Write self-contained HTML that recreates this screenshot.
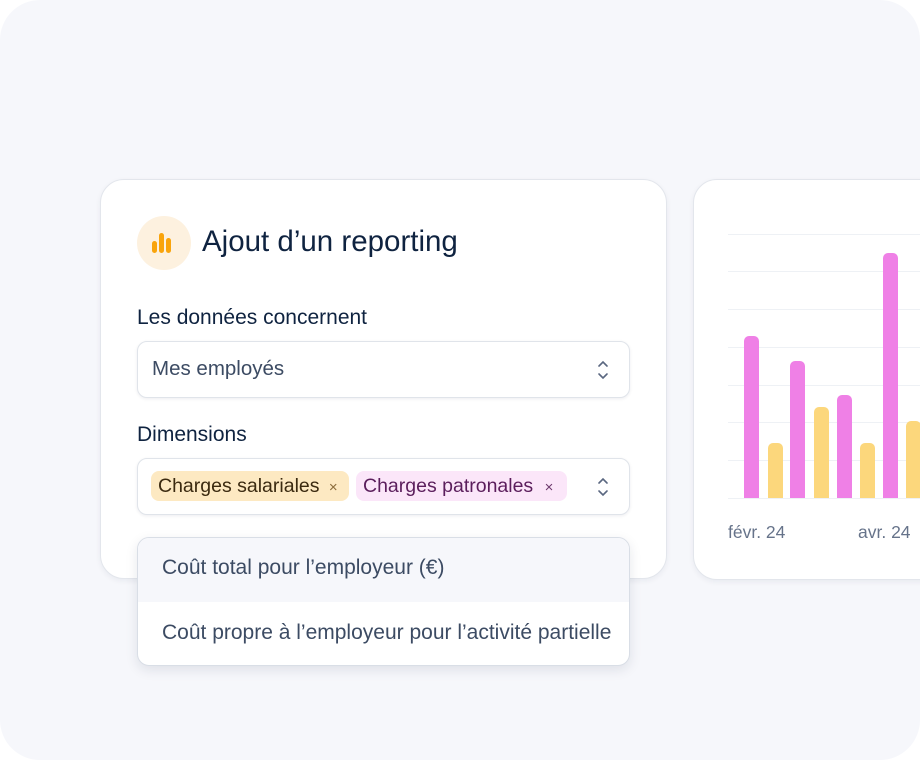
<!DOCTYPE html>
<html><head><meta charset="utf-8"><style>
*{box-sizing:border-box;margin:0;padding:0}
body{width:920px;height:760px;background:#fff;font-family:"Liberation Sans",sans-serif;position:relative;overflow:hidden}
.bg{position:absolute;left:0;top:0;width:920px;height:760px;background:#f6f7fb;border-radius:40px}
.card{position:absolute;background:#fff;border:1px solid #e3e6ec;border-radius:24px;box-shadow:0 2px 6px rgba(20,30,60,.06)}
.abs{position:absolute}
.sel{position:absolute;left:137px;width:493px;height:57px;border:1px solid #e0e4ea;border-radius:10px;background:#fff;box-shadow:0 1px 3px rgba(20,30,60,.08)}
.lbl{position:absolute;left:137px;font-size:21px;color:#0f2340}
.tag{position:absolute;top:471px;height:30px;border-radius:8px;font-size:19.5px;line-height:31px;padding-left:7px;white-space:nowrap}
.grid{position:absolute;left:728px;width:192px;height:1px;background:#eef1f5}
.bar{position:absolute;width:15px;border-radius:5px 5px 0 0}
.p{background:#ef80e6}.y{background:#fcd77c}
</style></head><body>
<div class="bg"></div>
<div class="card" style="left:100px;top:179px;width:567px;height:400px"></div>
<div class="card" style="left:693px;top:179px;width:260px;height:401px"></div>

<div class="abs" style="left:137px;top:216px;width:54px;height:54px;border-radius:50%;background:#fdf1df"></div>
<svg class="abs" style="left:150px;top:230px" width="28" height="26"><rect x="2" y="11" width="5" height="12" rx="2.5" fill="#f9a40c"/><rect x="9" y="3" width="5" height="20" rx="2.5" fill="#f9a40c"/><rect x="16" y="8" width="5" height="15" rx="2.5" fill="#f9a40c"/></svg>
<div class="abs" style="left:202px;top:225px;font-size:29.5px;color:#0f2340">Ajout d’un reporting</div>

<div class="lbl" style="top:306px">Les données concernent</div>
<div class="sel" style="top:341px"></div>
<div class="abs" style="left:152px;top:357px;font-size:20.5px;color:#3c4b63">Mes employés</div>
<svg class="abs" style="left:596px;top:359px" width="14" height="22"><path d="M3 7l4-4 4 4M3 15l4 4 4-4" fill="none" stroke="#5a6780" stroke-width="1.6" stroke-linecap="round"/></svg>

<div class="lbl" style="top:423px">Dimensions</div>
<div class="sel" style="top:458px"></div>
<div class="tag" style="left:151px;width:198px;background:#fde9c2;color:#3b2a10">Charges salariales <span style="font-size:15px;color:#8a6b3a;margin-left:4px">×</span></div>
<div class="tag" style="left:356px;width:211px;background:#fbe6f9;color:#5b1e5c">Charges patronales <span style="font-size:15px;color:#6e3a6e;margin-left:6px">×</span></div>
<svg class="abs" style="left:596px;top:476px" width="14" height="22"><path d="M3 7l4-4 4 4M3 15l4 4 4-4" fill="none" stroke="#5a6780" stroke-width="1.6" stroke-linecap="round"/></svg>

<div class="abs" style="left:137px;top:537px;width:493px;height:129px;background:#fff;border:1px solid #d9dee6;border-radius:12px;box-shadow:0 4px 12px rgba(20,30,60,.10);overflow:hidden">
<div style="height:64px;background:#f6f7fb;padding:18px 0 0 24px;font-size:21px;color:#3c4b63;white-space:nowrap">Coût total pour l’employeur (€)</div>
<div style="padding:19px 0 0 24px;font-size:21px;color:#3c4b63;white-space:nowrap">Coût propre à l’employeur pour l’activité partielle</div>
</div>

<div class="grid" style="top:234px"></div><div class="grid" style="top:271px"></div><div class="grid" style="top:309px"></div><div class="grid" style="top:347px"></div><div class="grid" style="top:385px"></div><div class="grid" style="top:422px"></div><div class="grid" style="top:460px"></div><div class="grid" style="top:498px"></div>
<div class="bar p" style="left:744px;top:336px;height:162px"></div>
<div class="bar y" style="left:768px;top:443px;height:55px"></div>
<div class="bar p" style="left:790px;top:361px;height:137px"></div>
<div class="bar y" style="left:814px;top:407px;height:91px"></div>
<div class="bar p" style="left:837px;top:395px;height:103px"></div>
<div class="bar y" style="left:860px;top:443px;height:55px"></div>
<div class="bar p" style="left:883px;top:253px;height:245px"></div>
<div class="bar y" style="left:906px;top:421px;height:77px"></div>
<div class="abs" style="left:728px;top:522px;font-size:17.5px;color:#66738a">févr. 24</div>
<div class="abs" style="left:858px;top:522px;font-size:17.5px;color:#66738a">avr. 24</div>
</body></html>
